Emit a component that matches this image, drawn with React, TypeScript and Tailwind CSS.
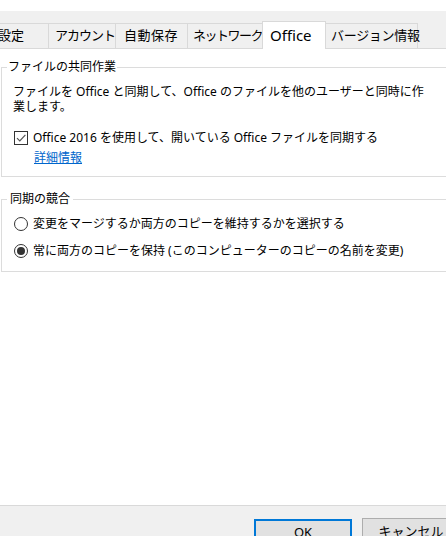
const font = { fontFamily: '"Noto Sans", "Noto Sans CJK JP", sans-serif' };

const tabs = [
  { label: "設定", cls: "w-[59px] pl-[8px] border-r" },
  { label: "アカウント", cls: "w-[67px] pl-[6px] border-r tracking-[-1px]" },
  { label: "自動保存", cls: "w-[72px] pl-[8px] border-r tracking-[0.5px]" },
  { label: "ネットワーク", cls: "w-[74px] pl-[5px] tracking-[-1.5px]" },
];

function CheckBox() {
  return (
    <span className="flex h-[14px] w-[14px] shrink-0 items-center justify-center border border-[#333] bg-white">
      <svg width="12" height="12" viewBox="0 0 12 12" fill="none">
        <path d="M2 6.2 L4.8 9 L10.4 2.8" stroke="#555" strokeWidth="1.2" />
      </svg>
    </span>
  );
}

function Radio({ checked }: { checked?: boolean }) {
  return (
    <span className="flex h-[14px] w-[14px] shrink-0 items-center justify-center rounded-full border border-[#333] bg-white">
      {checked && <span className="h-[8px] w-[8px] rounded-full bg-[#333]" />}
    </span>
  );
}

export default function App() {
  return (
    <div className="flex h-[536px] w-[446px] flex-col overflow-hidden bg-white text-[12px] text-black" style={font}>
      <div className="h-[11px] shrink-0 bg-white" />

      {/* tab strip */}
      <div className="flex h-[38px] shrink-0 items-end border-b border-[#d9d9d9] bg-[#f0f0f0]">
        <div className="ml-[-10px] flex items-end text-[13px]">
          {tabs.map((t) => (
            <div
              key={t.label}
              className={`flex h-[25px] items-center whitespace-nowrap border-t border-[#d9d9d9] ${t.cls}`}
            >
              {t.label}
            </div>
          ))}
          <div className="mb-[-1px] flex h-[28px] w-[64px] items-center border-x border-t border-[#d9d9d9] bg-white pl-[7px] text-[15px]">
            Office
          </div>
          <div className="flex h-[25px] w-[92px] items-center whitespace-nowrap border-r border-t border-[#d9d9d9] pl-[5px] tracking-[-0.3px]">
            バージョン情報
          </div>
        </div>
      </div>

      {/* page body */}
      <div className="flex-1 bg-white">
        <fieldset className="ml-[1px] mt-[10px] w-[480px] border border-[#dcdcdc] pb-[10px] pl-[5px]">
          <legend className="px-[1px] leading-[16px]">ファイルの共同作業</legend>
          <p className="ml-[6px] mt-[9px] whitespace-nowrap leading-[15px]">
            ファイルを Office と同期して、Office のファイルを他のユーザーと同時に作
            <br />
            業します。
          </p>
          <label className="ml-[7px] mt-[16px] flex h-[16px] items-center gap-[5px] whitespace-nowrap">
            <CheckBox />
            Office 2016 を使用して、開いている Office ファイルを同期する
          </label>
          <a href="#" className="ml-[27px] mt-[4px] block w-fit leading-[16px] text-[#0066cc] underline">
            詳細情報
          </a>
        </fieldset>

        <fieldset className="ml-[1px] mt-[14px] w-[480px] border border-[#dcdcdc] pb-[12px] pl-[5px]">
          <legend className="px-[3px] leading-[16px]">同期の競合</legend>
          <label className="ml-[7px] mt-[9px] flex h-[16px] items-center gap-[5px] whitespace-nowrap">
            <Radio />
            変更をマージするか両方のコピーを維持するかを選択する
          </label>
          <label className="ml-[7px] mt-[11px] flex h-[16px] items-center gap-[5px] whitespace-nowrap">
            <Radio checked />
            常に両方のコピーを保持 (このコンピューターのコピーの名前を変更)
          </label>
        </fieldset>
      </div>

      {/* dialog buttons */}
      <div className="flex h-[31px] shrink-0 items-start gap-[10px] border-t border-[#d9d9d9] bg-[#f0f0f0] pl-[254px] pt-[13px]">
        <button className="h-[24px] w-[98px] shrink-0 border-2 border-[#0078d7] bg-[#e1e1e1] pt-[2px] text-[13px]">OK</button>
        <button className="mt-[-1px] h-[24px] w-[98px] shrink-0 border border-[#adadad] bg-[#e1e1e1] pt-[3px] text-[13px]">
          キャンセル
        </button>
      </div>
    </div>
  );
}
